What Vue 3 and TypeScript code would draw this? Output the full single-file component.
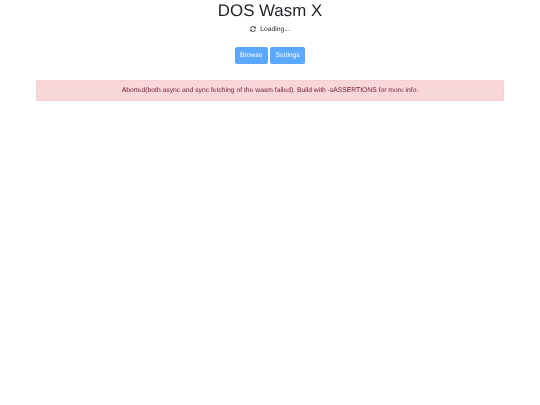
<script setup lang="ts">
const title: string = 'DOS Wasm X'
</script>

<template>
  <div class="page">
    <h1 class="title">{{ title }}</h1>
    <div class="status">
      <svg class="spin" viewBox="0 0 512 512" width="6" height="6"><path fill="#4a5057" d="M370.7 133.3C339.5 104 298.9 88 255.8 88c-77.5.1-144.3 53.2-162.8 126.9-1.3 5.4-6.1 9.2-11.7 9.2H24.1c-7.5 0-13.2-6.8-11.8-14.2C33.9 94.9 134.8 8 256 8c66.4 0 126.8 26.1 171.3 68.7L463 41C478.1 25.9 504 36.6 504 57.9V192c0 13.3-10.7 24-24 24H345.9c-21.4 0-32.1-25.9-17-41l41.8-41.7zM32 296h134.1c21.4 0 32.1 25.9 17 41l-41.8 41.8c31.3 29.3 71.8 45.3 114.9 45.2 77.4-.1 144.3-53.1 162.8-126.8 1.3-5.4 6.1-9.2 11.7-9.2h57.3c7.5 0 13.2 6.8 11.8 14.2C478.1 417.1 377.2 504 256 504c-66.4 0-126.8-26.1-171.3-68.7L49 471C33.9 486.1 8 475.4 8 454.1V320c0-13.3 10.7-24 24-24z"/></svg>
      <span>Loading...</span>
    </div>
    <div class="actions">
      <button class="btn" type="button">Browse</button>
      <button class="btn" type="button">Settings</button>
    </div>
    <div class="alert">Aborted(both async and sync fetching of the wasm failed). Build with -sASSERTIONS for more info.</div>
  </div>
</template>

<style scoped>
.page { display: flex; flex-direction: column; align-items: center; font-family: "Liberation Sans", Arial, sans-serif; color: #212529; padding: 1px 36px 0; text-rendering: geometricPrecision; filter: blur(0.3px); background: #fff; min-height: 405px; box-sizing: border-box; }
.title { margin: 0; font-size: 16.875px; font-weight: 400; line-height: 20px; }
.status { display: flex; align-items: center; gap: 4px; font-size: 6.75px; height: 12px; margin-top: 2px; }
.actions { display: flex; gap: 2px; margin-top: 12px; }
.btn { background: #5ba8ff; color: #fff; border: 0; border-radius: 2px; font: 6.75px "Liberation Sans", Arial, sans-serif; text-rendering: geometricPrecision; height: 17px; padding: 0 5.5px; }
.alert { align-self: stretch; margin-top: 16px; height: 21px; box-sizing: border-box; display: flex; align-items: center; justify-content: center; background: #f8d7da; border: 1px solid #f6d0d4; color: #721c24; font-size: 6.75px; border-radius: 1px; }
</style>
